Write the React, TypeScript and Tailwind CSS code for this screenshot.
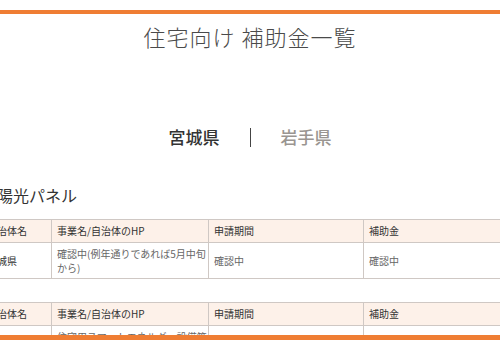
const font = { fontFamily: '"Noto Sans CJK JP", "Noto Sans", sans-serif' };

type Row = { city: string; name: string; period: string; amount: string };

const solarRows: Row[] = [
  { city: "宮城県", name: "確認中(例年通りであれば5月中旬から)", period: "確認中", amount: "確認中" },
];

const secondRows: Row[] = [
  { city: "仙台市", name: "住宅用スマートエネルギー設備等導入費補助金", period: "", amount: "" },
];

function SubsidyTable({ rows }: { rows: Row[] }) {
  const cell = "border border-[#cfc8c4] pl-[5px] pr-px align-middle";
  return (
    <table className="border-collapse table-fixed w-[537px] text-[10px] leading-[14px]">
      <colgroup>
        <col className="w-[70px]" />
        <col className="w-[157px]" />
        <col className="w-[155px]" />
        <col className="w-[155px]" />
      </colgroup>
      <thead>
        <tr className="bg-[#fdf1e9] text-[#333] h-[23px]">
          <th className={`${cell} font-normal text-left`}>自治体名</th>
          <th className={`${cell} font-normal text-left`}>事業名/自治体のHP</th>
          <th className={`${cell} font-normal text-left`}>申請期間</th>
          <th className={`${cell} font-normal text-left`}>補助金</th>
        </tr>
      </thead>
      <tbody>
        {rows.map((r) => (
          <tr key={r.name} className="text-[#666]">
            <td className={`${cell} py-[3.5px] text-[#333]`}>{r.city}</td>
            <td className={`${cell} py-[3.5px]`}>{r.name}</td>
            <td className={`${cell} py-[3.5px]`}>{r.period}</td>
            <td className={`${cell} py-[3.5px]`}>{r.amount}</td>
          </tr>
        ))}
      </tbody>
    </table>
  );
}

export default function App() {
  return (
    <div className="w-[500px] h-[340px] overflow-hidden bg-white relative" style={font}>
      <div className="mt-[10px] h-[4px] bg-[#ef7d33]" />

      <h1 className="mt-[6px] text-center text-[22px] leading-[33px] tracking-[1px] text-[#4a4a4a] font-light">
        住宅向け 補助金一覧
      </h1>

      <div className="mt-[74px] flex justify-center items-center gap-[30px] text-[17px] leading-[20px]">
        <span className="font-medium text-[#333]">宮城県</span>
        <span className="w-px h-[19px] bg-[#444]" />
        <span className="font-medium text-[#9a9591]">岩手県</span>
      </div>

      <div className="ml-[-19px]">
        <h2 className="mt-[36px] text-[16px] leading-[24px] text-[#333] font-normal">太陽光パネル</h2>

        <div className="mt-[12px]">
          <SubsidyTable rows={solarRows} />
        </div>

        <div className="mt-[23px]">
          <SubsidyTable rows={secondRows} />
        </div>
      </div>

      <div className="absolute left-0 right-0 bottom-0 h-[5px] bg-[#ef7d33]" />
    </div>
  );
}
